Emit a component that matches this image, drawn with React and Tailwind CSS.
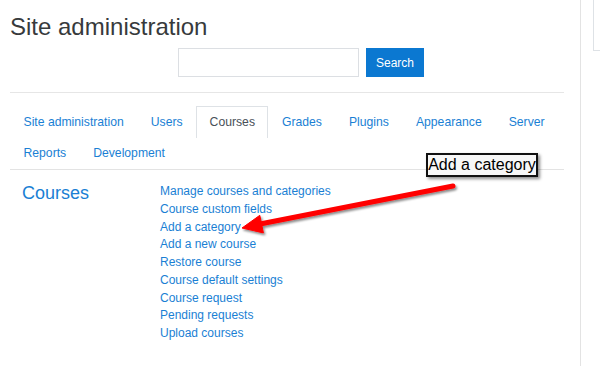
const tabsTop = ['Site administration', 'Users', 'Courses', 'Grades', 'Plugins', 'Appearance', 'Server'];
const tabsBottom = ['Reports', 'Development'];

const links = [
  'Manage courses and categories',
  'Course custom fields',
  'Add a category',
  'Add a new course',
  'Restore course',
  'Course default settings',
  'Course request',
  'Pending requests',
  'Upload courses',
];

function Tab({ label, active }) {
  return (
    <li
      className={
        active
          ? 'flex shrink-0 items-center whitespace-nowrap px-[12.5px] border border-b-0 border-[#dee2e6] bg-white text-[#495057]'
          : 'flex shrink-0 items-center whitespace-nowrap px-[12.5px] border border-transparent text-[#1a7fd4]'
      }
    >
      {label}
    </li>
  );
}

export default function App() {
  return (
    <div className="relative w-[600px] h-[366px] overflow-hidden bg-white font-['Liberation_Sans',Arial,sans-serif]">
      <div className="flex h-full">
        {/* Main column */}
        <div className="w-[581px] shrink-0 border-r border-[#e3e3e3] pl-[10px] pr-[16px] pt-[12px]">
          <h1 className="text-[24px] leading-[29px] text-[#373a3c]">Site administration</h1>

          {/* Search */}
          <div className="mt-[7px] ml-[168px] flex gap-[7px]">
            <input
              type="text"
              className="w-[181px] h-[29px] border border-[#dcdfe3] bg-white outline-none"
            />
            <button className="w-[58px] h-[29px] bg-[#0b78d1] text-white text-[12px]">Search</button>
          </div>

          <hr className="mt-[15px] border-0 border-t border-[#e6e6e6]" />

          {/* Tabs */}
          <div className="mt-[13px] border-b border-[#e3e3e3] text-[12.2px]">
            <ul className="flex h-[32px]">
              {tabsTop.map((t) => (
                <Tab key={t} label={t} active={t === 'Courses'} />
              ))}
            </ul>
            <ul className="flex h-[31px]">
              {tabsBottom.map((t) => (
                <Tab key={t} label={t} />
              ))}
            </ul>
          </div>

          {/* Courses section */}
          <div className="flex pt-[13px]">
            <div className="w-[150px] shrink-0 pl-[12px]">
              <h2 className="text-[18px] leading-[20px] text-[#1a7fd4]">Courses</h2>
            </div>
            <ul className="text-[12px] leading-[17.75px] text-[#1a7fd4]">
              {links.map((l) => (
                <li key={l}>{l}</li>
              ))}
            </ul>
          </div>
        </div>

        {/* Right column */}
        <div className="flex-1 pl-[12px]">
          <div className="h-[51px] border-l border-b border-[#dee2e6]" />
        </div>
      </div>

      {/* Annotation label */}
      <div className="absolute left-[426px] top-[153px] w-[112px] h-[24px] border-2 border-[#111] bg-[#f7f7f7] shadow-[2px_2px_3px_rgba(0,0,0,0.45)] flex items-center justify-center text-[16px] leading-[20px] text-black">
        Add a category
      </div>

      {/* Annotation arrow */}
      <svg className="absolute left-0 top-0 pointer-events-none" width="600" height="366" viewBox="0 0 600 366">
        <defs>
          <filter id="sh" x="-10%" y="-50%" width="120%" height="200%">
            <feDropShadow dx="1.5" dy="2" stdDeviation="1.2" floodColor="#000" floodOpacity="0.45" />
          </filter>
        </defs>
        <g filter="url(#sh)" fill="#ff0000" stroke="#ff0000">
          <line x1="453" y1="186" x2="260" y2="224" strokeWidth="5" strokeLinecap="round" />
          <polygon points="242,228 259.8,215.3 263.4,232.9" strokeWidth="1" strokeLinejoin="round" />
        </g>
      </svg>
    </div>
  );
}
